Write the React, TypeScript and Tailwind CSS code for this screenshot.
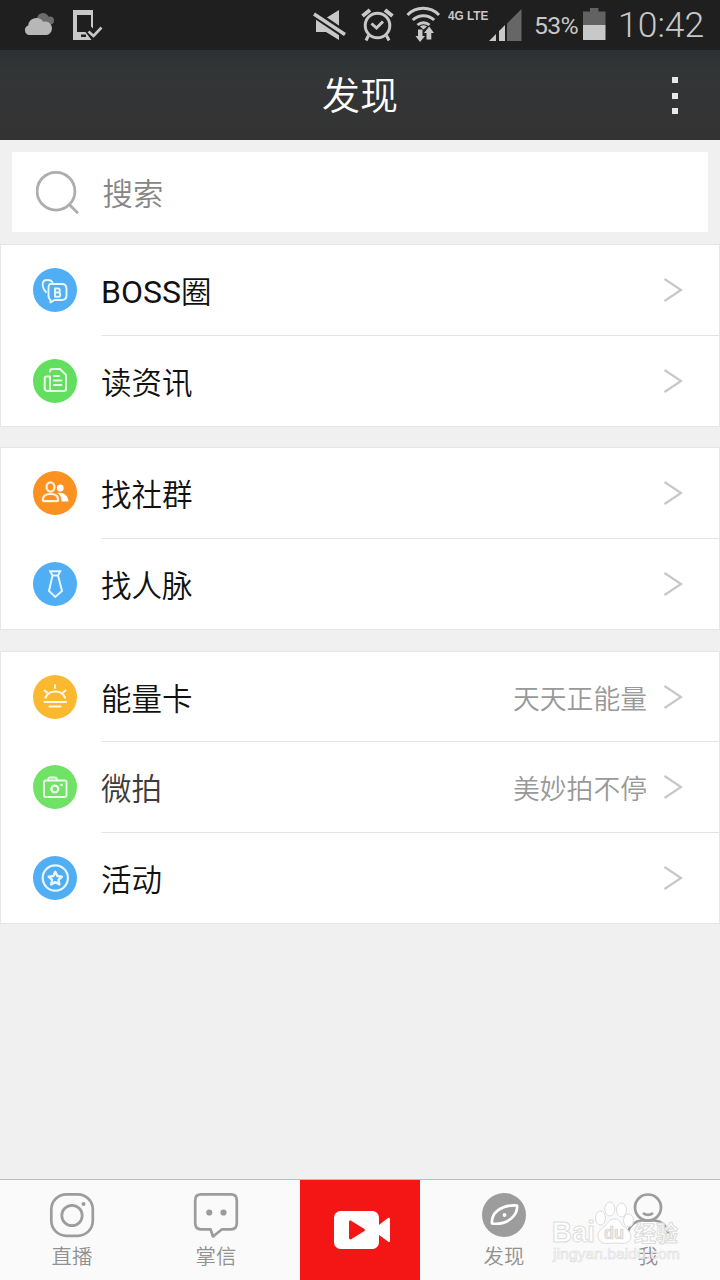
import type { ReactNode } from 'react';

type RowProps = { label: string; latin?: string; color: string; icon: ReactNode; note?: string; muted?: boolean; last?: boolean };

function Row({ label, latin, color, icon, note, muted, last }: RowProps) {
  return (
    <div className="flex flex-1 pl-8">
      <div className="flex w-[68px] shrink-0 items-center">
        <svg viewBox="0 0 44 44" className={`h-11 w-11 ${color}`} fill="none" stroke="white" strokeOpacity=".88" strokeWidth="1.9" strokeLinecap="round" strokeLinejoin="round">
          <circle cx="22" cy="22" r="22" fill="currentColor" stroke="none" />
          {icon}
        </svg>
      </div>
      <div className={`flex flex-1 items-center pr-9 ${last ? '' : 'border-b border-[#e4e4e4]'}`}>
        <span className={`flex-1 ${latin ? 'pt-[5px]' : 'pt-[7px]'} text-[30.5px] leading-none font-[350] ${muted ? 'text-[#3c3c3c]' : 'text-[#111]'}`}>
          {latin && <span className="text-[32px] leading-none font-normal">{latin}</span>}{label}
        </span>
        {note && <span className="pr-4 pt-[7px] text-[26.8px] leading-none font-[350] text-[#999]">{note}</span>}
        <svg viewBox="0 0 20 26" className="h-[26px] w-5" fill="none" stroke="#c8c8c8" strokeWidth="2.2">
          <path d="M1.5 2 18 13 1.5 24" />
        </svg>
      </div>
    </div>
  );
}

function Card({ height, children }: { height: string; children: ReactNode }) {
  return <section className={`flex flex-col border border-[#e6e6e6] bg-white ${height}`}>{children}</section>;
}

function Tab({ label, children }: { label: string; children: ReactNode }) {
  return (
    <div className="flex flex-1 flex-col items-center pt-3">
      <svg viewBox="0 0 46 46" className="h-[46px] w-[46px]" fill="none" stroke="#9c9c9c" strokeWidth="2.7" strokeLinejoin="round">{children}</svg>
      <span className="mt-[9px] text-[20.4px] leading-none font-[350] text-[#919191]">{label}</span>
    </div>
  );
}

function StatusBar() {
  return (
    <div className="flex h-[50px] shrink-0 items-center bg-[#1f1f1f] text-[#c8c8c8]">
      <svg viewBox="24 0 30 50" className="ml-6 h-[50px] w-[30px]">
        <g fill="#6c6c6c"><circle cx="43" cy="19" r="6" /><circle cx="50" cy="20.5" r="4" /><rect x="40" y="18" width="12" height="6" /></g>
        <path fill="#b7b7b7" d="M29 35a5 5 0 0 1-.8-9.6A8.2 8.2 0 0 1 43.2 21.7a6.8 6.8 0 1 1 3.8 13.3Z" />
      </svg>
      <svg viewBox="73 0 30 50" className="ml-[19px] h-[50px] w-[30px]">
        <path fill="#c8c8c8" fillRule="evenodd" d="M73 10h20v18.5l-2-2V15H77v17h8.5l6 8H73ZM81 34.5v2.5h5v-2.5Z" />
        <path d="m88.5 31.5 5 4.5 8-8.5" fill="none" stroke="#c8c8c8" strokeWidth="2.6" />
      </svg>
      <svg viewBox="313 0 34 50" className="ml-[210px] h-[50px] w-[34px]">
        <path fill="#c8c8c8" d="M316 18h10l13-8v30l-13-8h-10Z" />
        <path d="m313 12.8 34 23" stroke="#1f1f1f" strokeWidth="8" />
        <path d="m314 14 31 20.5" stroke="#c8c8c8" strokeWidth="3.5" />
      </svg>
      <svg viewBox="361 0 34 50" className="ml-[14px] h-[50px] w-[34px]" fill="none" stroke="#c8c8c8" strokeWidth="3">
        <circle cx="377.5" cy="25.5" r="12.3" />
        <path d="m371.5 23.5 5 4.5 6.5-6.5M368.5 35.5l-2.5 5M386.5 35.5l2.5 5" />
        <path strokeWidth="4" d="m362.5 16 7.5-6M392.5 16 385 10" />
      </svg>
      <svg viewBox="406 0 36 50" className="ml-[11px] h-[50px] w-9" fill="none" stroke="#c8c8c8" strokeWidth="3">
        <path d="M407.5 15a22 22 0 0 1 31.5 0M412.7 20a15.5 15.5 0 0 1 21.5 0M417.5 25a9 9 0 0 1 12 0" />
        <path fill="#c8c8c8" stroke="none" d="m420 26.5 3.5 3 3.5-3a6 6 0 0 0-7 0ZM418 29.5h4.5v6.5h2.5l-5 6-4.5-6h2.5ZM426.5 39.5V33h-2.5l5.2-6.5 4.8 6.5h-2.7v6.5Z" />
      </svg>
      <div className="ml-[6px] w-[41px] pb-[18px] font-['Liberation_Sans'] text-[12px] leading-none font-bold whitespace-nowrap"><span className="inline-block origin-left scale-x-[.98]">4G LTE</span></div>
      <svg viewBox="489 0 34 50" className="h-[50px] w-[34px]">
        <path fill="#c8c8c8" d="m489 41 7-7v7Zm10-10 6-6v16h-6Z" />
        <path fill="#666" d="M507 23.5 521.5 9v32H507Z" />
      </svg>
      <span className="ml-[11px] w-[49px] pt-[3px] font-[Roboto] text-[24.8px] leading-none font-normal tracking-[-0.7px] whitespace-nowrap">53%</span>
      <svg viewBox="583 0 23 50" className="h-[50px] w-[23px]">
        <path fill="#626262" d="M583 11.5h7V8h8.5v3.5h7V25H583Z" />
        <path fill="#c8c8c8" d="M583 25h22.5v15H583Z" />
      </svg>
      <span className="ml-3 pt-[1px] font-[Roboto] text-[35.5px] leading-none font-light whitespace-nowrap">10:42</span>
    </div>
  );
}

function Watermark() {
  return (
    <svg viewBox="548 1198 138 70" className="absolute right-[34px] bottom-[12px] h-[70px] w-[138px]" fontFamily="Liberation Sans, Noto Sans CJK SC, sans-serif" fontWeight="700" fill="#fff" stroke="#dcdcdc" strokeWidth="1" strokeLinejoin="round">
      <g fillOpacity=".88">
        <ellipse cx="600.5" cy="1218" rx="5" ry="7" /><ellipse cx="609.8" cy="1209" rx="5" ry="7" />
        <ellipse cx="621.5" cy="1210" rx="5" ry="7" /><ellipse cx="628.5" cy="1220.5" rx="5" ry="6.5" />
        <path d="M600 1241c-5-6 0-12 5-15 3-4 6-8 10-7 4 0 5 3 8 7 5 3 10 9 7 14-4 5-10 3-15 3s-11 2-15-2Z" />
      </g>
      <text x="552" y="1242" fontSize="29" textLength="43" lengthAdjust="spacingAndGlyphs">Bai</text>
      <text x="604" y="1239" fontSize="18" fill="#ececec" stroke="#cfcfcf" strokeWidth=".7" textLength="20" lengthAdjust="spacingAndGlyphs">du</text>
      <text x="634" y="1241" fontSize="22" fillOpacity=".85" textLength="44">经验</text>
      <text x="553" y="1259" fontSize="15" fontWeight="400" strokeWidth=".6" fillOpacity=".6" textLength="127" lengthAdjust="spacingAndGlyphs">jingyan.baidu.com</text>
    </svg>
  );
}

export default function App() {
  return (
    <main className="relative flex h-[1280px] w-[720px] flex-col overflow-hidden bg-[#f0f0f0] font-['Roboto','Noto_Sans_CJK_SC',sans-serif]">
      <StatusBar />
      <header className="flex h-[90px] shrink-0 items-center bg-linear-to-b from-[#2d3033] from-0% via-[#323536] via-20% to-[#343333] pr-[42px] pl-[48px]">
        <h1 className="flex-1 pt-[2px] text-center text-[38px] leading-none font-[350] text-white">发现</h1>
        <div className="flex flex-col gap-[9.5px] pt-[1px]">
          <i className="h-1.5 w-1.5 bg-[#e8e8e8]" /><i className="h-1.5 w-1.5 bg-[#e8e8e8]" /><i className="h-1.5 w-1.5 bg-[#e8e8e8]" />
        </div>
      </header>
      <div className="mx-3 mt-3 mb-3 flex h-20 shrink-0 items-center bg-white pl-6">
        <svg viewBox="0 -1.2 44 44" className="h-11 w-11" fill="none" stroke="#adadad" strokeWidth="2.8">
          <circle cx="20" cy="20" r="18.9" /><path d="m33 33 9 9" />
        </svg>
        <span className="ml-[22.5px] pt-[7px] text-[30.4px] leading-none font-[350] text-[#868686]">搜索</span>
      </div>
      <div className="flex flex-col">
        <Card height="h-[183px]">
          <Row latin="BOSS" label="圈" color="text-[#50aef5]" icon={<>
            <path d="M13 24c-3-3-3.5-5-3.3-8.5.2-2.5 1.5-3.5 4.5-3.5s5 .3 5.3 3M17.5 16H29c3 0 4.5 1.5 4.5 5v6c0 3-1.5 5-4.5 5h-7.5l-4 2.5V32c-1.5-1-2-3-2-5v-6c0-3 .5-5 2-5Z" />
            <path d="M22 20.5h2.8c2.7 0 2.7 4 0 4H22Zm0 4h3.2c2.8 0 2.8 4.3 0 4.3H22Z" />
          </>} />
          <Row last label="读资讯" color="text-[#62df5e]" icon={<>
            <path strokeWidth="2" d="M17 12.5c0-1.7.7-2.5 2-2.5h8l6 6v14c0 1.3-.7 2-2 2H14.5c-2 0-2.8-1-2.8-3V19c0-1 .8-1.5 2-1.5H17V32" />
            <path d="M21 17h5m-5 4.5h7.5M21 26h7.5" />
          </>} />
        </Card>
        <div className="h-5" />
        <Card height="h-[183px]">
          <Row label="找社群" color="text-[#fa9120]" icon={<>
            <ellipse cx="17.5" cy="16" rx="4" ry="4.6" strokeWidth="2.2" />
            <path strokeWidth="2.2" d="M9.8 29c0-5 4-6 7.7-6s7.7 1.5 7.7 6c0 .8-.5 1.2-1.5 1.2H11.3c-1 0-1.5-.4-1.5-1.2Z" />
            <circle cx="27.3" cy="17" r="3.4" fill="white" stroke="none" />
            <path fill="white" stroke="none" d="M24.5 22c7-1 10.5 3 11 8.5H28.5c0-3.8-1.2-6.5-4-8.5Z" />
          </>} />
          <Row last label="找人脉" color="text-[#50aef5]" icon={<path strokeWidth="2" strokeLinejoin="miter" d="M17.2 9.2h10L25 13.5l4 15.5-6.7 6L16 29l3.5-15.5Zm2.3 4.3H25" />} />
        </Card>
        <div className="h-[21px]" />
        <Card height="h-[273px]">
          <Row label="能量卡" color="text-[#fbb931]" note="天天正能量" icon={<>
            <path strokeWidth="2.2" d="M12.5 22.5c3.5-8 16-8 19.5 0M11.5 27H33M16.5 31.5h11" />
            <path d="M22 10v3M11.5 15.5l2.5 2M32.5 15.5 30 17.5" />
          </>} />
          <Row muted label="微拍" color="text-[#70e266]" note="美妙拍不停" icon={<>
            <rect x="11" y="15.5" width="22.5" height="16.5" rx="1.5" />
            <path d="M15 15.5c0-2.3.5-3 2-3h5c1.5 0 2 .7 2 3" />
            <circle cx="21.8" cy="24" r="3.4" strokeWidth="2.3" /><circle cx="28.5" cy="20" r="1.3" fill="white" stroke="none" />
          </>} />
          <Row last label="活动" color="text-[#50aef5]" icon={<>
            <circle cx="22.3" cy="22" r="12.6" strokeWidth="2.2" />
            <path strokeWidth="2.4" d="m22.3 15.8 2 4.2 4.6.6-3.4 3.2.9 4.6-4.1-2.3-4.1 2.3.9-4.6-3.4-3.2 4.6-.6Z" />
          </>} />
        </Card>
      </div>
      <nav className="mt-auto flex h-[101px] shrink-0 border-t border-[#bcbcbc] bg-[#fafafa]">
        <div className="flex w-[300px]">
          <div className="flex w-36"><Tab label="直播">
            <rect x="2.3" y="2.3" width="41.5" height="41.5" rx="15" /><circle cx="23" cy="23.5" r="10.2" />
            <circle cx="34.5" cy="12" r="2" fill="#9c9c9c" stroke="none" />
          </Tab></div>
          <div className="flex w-36"><Tab label="掌信">
            <path d="M8 2.3h30c4 0 5.8 2 5.8 6v23c0 4-1.8 6-5.8 6h-9L20 44.5l-2.5-7.2H8c-4 0-5.8-2-5.8-6v-23c0-4 1.8-6 5.8-6Z" />
            <circle cx="16.3" cy="20.5" r="3.1" fill="#9c9c9c" stroke="none" /><circle cx="30.5" cy="20.5" r="3.1" fill="#9c9c9c" stroke="none" />
          </Tab></div>
        </div>
        <div className="flex w-[120px] items-center justify-center bg-[#f41515]">
          <svg viewBox="0 0 58 40" className="ml-[3px] h-10 w-[58px]" fill="white">
            <rect x="1" y="1" width="45" height="38" rx="6.5" />
            <path d="M44 16.5 55 8q2-1 2 1.5v21q0 2.5-2 1L44 23.5Z" />
            <path d="M16 12.5c0-2 1-2.5 2.5-1.5L31 18.7q2 1.3 0 2.6L18.5 29c-1.5 1-2.5.5-2.5-1.5Z" fill="#f41515" />
          </svg>
        </div>
        <div className="flex w-[300px] pl-3">
          <div className="flex w-36"><Tab label="发现">
            <circle cx="23" cy="23" r="22" fill="#9c9c9c" stroke="none" />
            <path stroke="white" d="M11 31.5C10 21 20 12.5 36 13.5 37 23 27 33.5 11 31.5Z" />
            <circle cx="23.5" cy="23" r="1.9" fill="white" stroke="none" />
          </Tab></div>
          <div className="flex w-36"><Tab label="我">
            <circle cx="23" cy="15.5" r="13" /><path d="M18 21c3 2.3 7 2.3 10 0M2.5 40c3-7 8-11 14-11.5h13c7 .5 12 5 14 13.5" />
          </Tab></div>
        </div>
      </nav>
      <Watermark />
    </main>
  );
}
